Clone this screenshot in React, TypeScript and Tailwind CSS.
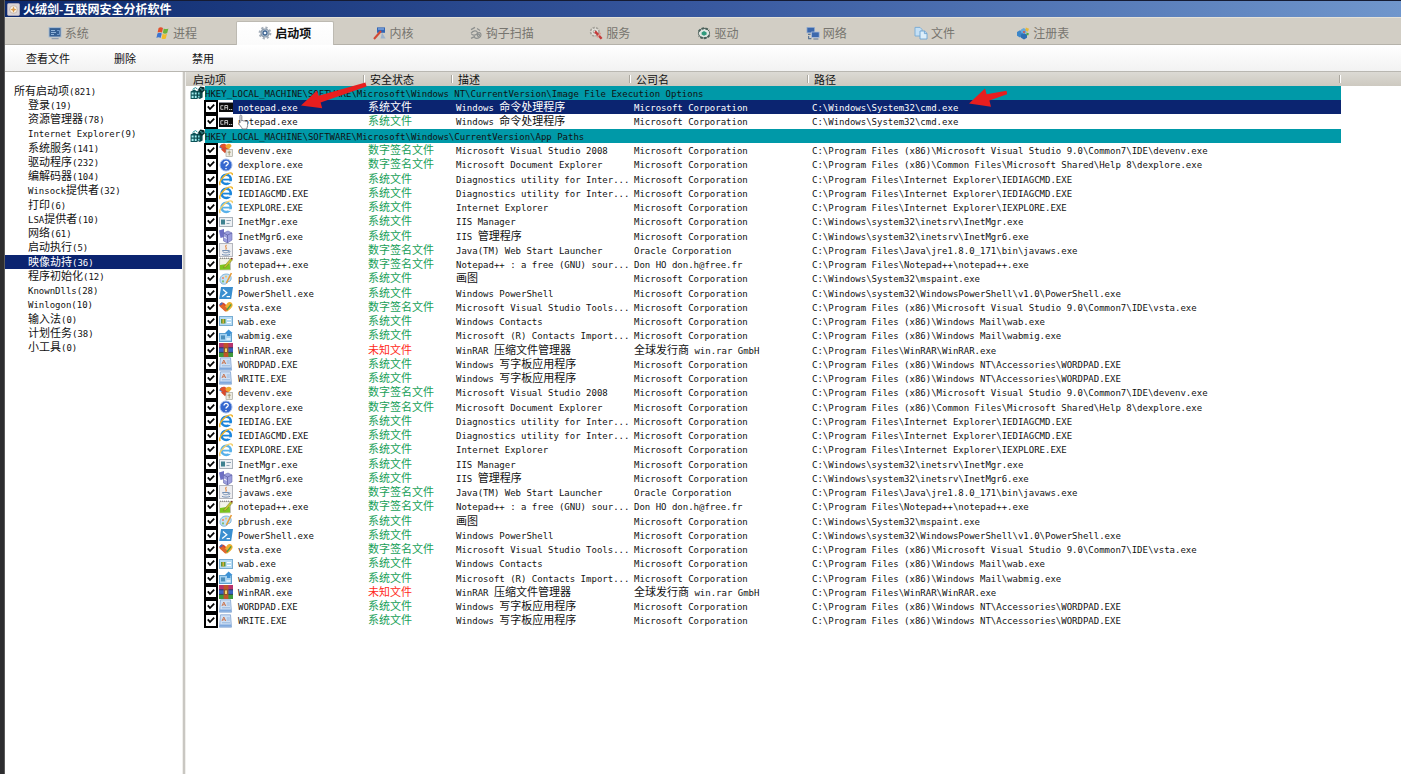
import React from "react";

type IconName =
  | "vs" | "help" | "ie" | "ieLight" | "card" | "server" | "java" | "npp" | "paint"
  | "ps" | "vsta" | "wab" | "wabmig" | "rar" | "doc" | "cmd";

type Entry = {
  icon: IconName;
  name: string;
  status: string;
  description: string;
  company: string;
  path: string;
};

const MS = "Microsoft Corporation";
const SYS = "系统文件";
const SIGNED = "数字签名文件";
const UNKNOWN = "未知文件";

const cmdEntry: Entry = {
  icon: "cmd", name: "notepad.exe", status: SYS, description: "Windows 命令处理程序", company: MS,
  path: "C:\\Windows\\System32\\cmd.exe",
};

const appPaths: Entry[] = [
  { icon: "vs", name: "devenv.exe", status: SIGNED, description: "Microsoft Visual Studio 2008", company: MS, path: "C:\\Program Files (x86)\\Microsoft Visual Studio 9.0\\Common7\\IDE\\devenv.exe" },
  { icon: "help", name: "dexplore.exe", status: SIGNED, description: "Microsoft Document Explorer", company: MS, path: "C:\\Program Files (x86)\\Common Files\\Microsoft Shared\\Help 8\\dexplore.exe" },
  { icon: "ie", name: "IEDIAG.EXE", status: SYS, description: "Diagnostics utility for Inter...", company: MS, path: "C:\\Program Files\\Internet Explorer\\IEDIAGCMD.EXE" },
  { icon: "ie", name: "IEDIAGCMD.EXE", status: SYS, description: "Diagnostics utility for Inter...", company: MS, path: "C:\\Program Files\\Internet Explorer\\IEDIAGCMD.EXE" },
  { icon: "ieLight", name: "IEXPLORE.EXE", status: SYS, description: "Internet Explorer", company: MS, path: "C:\\Program Files\\Internet Explorer\\IEXPLORE.EXE" },
  { icon: "card", name: "InetMgr.exe", status: SYS, description: "IIS Manager", company: MS, path: "C:\\Windows\\system32\\inetsrv\\InetMgr.exe" },
  { icon: "server", name: "InetMgr6.exe", status: SYS, description: "IIS 管理程序", company: MS, path: "C:\\Windows\\system32\\inetsrv\\InetMgr6.exe" },
  { icon: "java", name: "javaws.exe", status: SIGNED, description: "Java(TM) Web Start Launcher", company: "Oracle Corporation", path: "C:\\Program Files\\Java\\jre1.8.0_171\\bin\\javaws.exe" },
  { icon: "npp", name: "notepad++.exe", status: SIGNED, description: "Notepad++ : a free (GNU) sour...", company: "Don HO don.h@free.fr", path: "C:\\Program Files\\Notepad++\\notepad++.exe" },
  { icon: "paint", name: "pbrush.exe", status: SYS, description: "画图", company: MS, path: "C:\\Windows\\System32\\mspaint.exe" },
  { icon: "ps", name: "PowerShell.exe", status: SYS, description: "Windows PowerShell", company: MS, path: "C:\\Windows\\system32\\WindowsPowerShell\\v1.0\\PowerShell.exe" },
  { icon: "vsta", name: "vsta.exe", status: SIGNED, description: "Microsoft Visual Studio Tools...", company: MS, path: "C:\\Program Files (x86)\\Microsoft Visual Studio 9.0\\Common7\\IDE\\vsta.exe" },
  { icon: "wab", name: "wab.exe", status: SYS, description: "Windows Contacts", company: MS, path: "C:\\Program Files (x86)\\Windows Mail\\wab.exe" },
  { icon: "wabmig", name: "wabmig.exe", status: SYS, description: "Microsoft (R) Contacts Import...", company: MS, path: "C:\\Program Files (x86)\\Windows Mail\\wabmig.exe" },
  { icon: "rar", name: "WinRAR.exe", status: UNKNOWN, description: "WinRAR 压缩文件管理器", company: "全球发行商 win.rar GmbH", path: "C:\\Program Files\\WinRAR\\WinRAR.exe" },
  { icon: "doc", name: "WORDPAD.EXE", status: SYS, description: "Windows 写字板应用程序", company: MS, path: "C:\\Program Files (x86)\\Windows NT\\Accessories\\WORDPAD.EXE" },
  { icon: "doc", name: "WRITE.EXE", status: SYS, description: "Windows 写字板应用程序", company: MS, path: "C:\\Program Files (x86)\\Windows NT\\Accessories\\WORDPAD.EXE" },
];

const groups = [
  { key: "HKEY_LOCAL_MACHINE\\SOFTWARE\\Microsoft\\Windows NT\\CurrentVersion\\Image File Execution Options", entries: [cmdEntry, cmdEntry] },
  { key: "HKEY_LOCAL_MACHINE\\SOFTWARE\\Microsoft\\Windows\\CurrentVersion\\App Paths", entries: [...appPaths, ...appPaths] },
];

const categories = [
  "登录(19)", "资源管理器(78)", "Internet Explorer(9)", "系统服务(141)", "驱动程序(232)", "编解码器(104)",
  "Winsock提供者(32)", "打印(6)", "LSA提供者(10)", "网络(61)", "启动执行(5)", "映像劫持(36)", "程序初始化(12)",
  "KnownDlls(28)", "Winlogon(10)", "输入法(0)", "计划任务(38)", "小工具(0)",
];
const SELECTED_CATEGORY = 11;

/* Latin runs stay monospaced; Chinese runs take a larger size. */
function Mixed({ text }: { text: string }) {
  const parts = text.split(/([\u4e00-\u9fff]+)/).filter(Boolean);
  return (
    <>
      {parts.map((p, i) =>
        /[\u4e00-\u9fff]/.test(p) ? (
          <span key={i} className="text-[11px] leading-none">{p}</span>
        ) : (
          <React.Fragment key={i}>{p}</React.Fragment>
        ),
      )}
    </>
  );
}

function EntryIcon({ name }: { name: IconName }) {
  return (
    <svg viewBox="0 0 14 14" className="size-[14px] shrink-0" aria-hidden="true">
      {entryDrawings[name]}
    </svg>
  );
}

const ieShape = (main: string, ring: string) => (
  <>
    <circle cx="7.2" cy="7.4" r="4.6" fill="none" stroke={main} strokeWidth="2.6" />
    <path d="M3.5 7.6h8.4" stroke={main} strokeWidth="1.8" />
    <path d="M9.2 9.3h4v1.6h-4z" fill="#fff" />
    <path d="M1.2 13.2C-.6 10.6 3 5.2 7.4 2.4 10.4.5 13.8.1 13.4 3.2" fill="none" stroke={ring} strokeWidth="1.4" />
  </>
);

const entryDrawings: Record<IconName, React.ReactNode> = {
  cmd: (
    <>
      <rect x="0" y="2" width="14" height="10" fill="#0b0b0b" />
      <path d="M0 2.5h14" stroke="#8b8f99" />
      <path d="M4.4 5.7H1.8v3.6h2.6M5.8 9.8V5.5h2.8v4.3M5.8 7.7h2.8M10 9.5h1M11.6 9.5h1.6" fill="none" stroke="#d0d0d0" strokeWidth=".9" />
    </>
  ),
  vs: (
    <>
      <path d="M.2 4.5C1 1 4 0 6.4 2.2L4 6.5z" fill="#3f76c9" />
      <path d="M.8 3.5C2.5.2 6 0 8 2.5L5.4 7.4z" fill="#e2532c" />
      <path d="M6.4 3C8 0 12 .2 12.6 3L8.4 8z" fill="#f0a92f" />
      <path d="M2 6.4l4 3.8L9.4 6 6 4z" fill="#d94b2d" />
      <rect x="7" y="6.4" width="6.4" height="7.2" fill="#eceae2" stroke="#9a9a90" strokeWidth=".6" />
      <path d="M10.2 7.6v4.8M8.6 9.2h3.2" stroke="#a29467" strokeWidth=".9" />
    </>
  ),
  help: (
    <>
      <circle cx="7" cy="7" r="6" fill="#3467cf" stroke="#9db7e8" />
      <path d="M5 5.6c0-3 4.4-2.6 4.2-.2C9 7 7 6.8 7 8.6M7 10v1.3" fill="none" stroke="#fff" strokeWidth="1.3" />
    </>
  ),
  ie: ieShape("#1c86dc", "#f0b429"),
  ieLight: ieShape("#58b1ea", "#f3cf6b"),
  card: (
    <>
      <rect x=".5" y="2.5" width="13" height="9" fill="#eef1f4" stroke="#a9b2ba" />
      <rect x="2" y="4.5" width="4" height="5" fill="#3f8290" />
      <path d="M7.5 5.5h4.5M7.5 8.5h3" stroke="#8ea4b4" />
    </>
  ),
  server: (
    <>
      <path d="M0 1.5L5 0v8L1.5 9z" fill="#6d6fc4" />
      <path d="M4.5 4L9 2l4 2v7l-4.5 3-4-2z" fill="#9c9fdd" stroke="#6a6bb0" strokeWidth=".6" />
      <path d="M4.5 4l4 2V14M8.5 6L13 4" fill="none" stroke="#5a5ba2" strokeWidth=".7" />
      <path d="M5 8l2.6 1.4" stroke="#fff" />
    </>
  ),
  java: (
    <>
      <rect x=".5" y=".5" width="13" height="13" fill="#ededf0" stroke="#b4b6bd" />
      <path d="M7.5 2c-2.8 2 1.4 2.4-.8 4.6" fill="none" stroke="#e3883d" strokeWidth="1.1" />
      <path d="M3.5 7.5h6.2c0 3-6 3-6.2 0zM9.6 8c2-.6 1.8 1.8-.3 1.8M3 11.4c2 1 6 1 8 0" fill="none" stroke="#7590b4" strokeWidth="1" />
    </>
  ),
  npp: (
    <>
      <path d="M.6 1.6h10.8v11.2H.6z" fill="#f4f4ea" stroke="#a3a399" strokeWidth=".7" />
      <path d="M1 8l9.8-1.4.4 6-10.2.2z" fill="#7cc51d" />
      <path d="M5 9.5L11.8 1.4l1.8 1.4-6.8 7.4-2.2.8z" fill="#c9c52f" stroke="#6c7a2c" strokeWidth=".5" />
      <path d="M1 1.2h10" stroke="#777" strokeDasharray="1 1" />
      <circle cx="12.8" cy="1.6" r=".9" fill="#7a2c22" />
    </>
  ),
  paint: (
    <>
      <path d="M1 8c0-4 3-6 6.4-6 4 0 5.6 3 4.4 6-.8 2-2.8.9-3.4 2.4C7.6 13 1 13.4 1 8z" fill="#c3e1f4" stroke="#6ba6d2" strokeWidth=".8" />
      <circle cx="4" cy="6" r="1.1" fill="#e98a6b" />
      <circle cx="7" cy="4.6" r="1.1" fill="#f1c46c" />
      <circle cx="4" cy="9.4" r="1.1" fill="#7dbd72" />
      <path d="M7.4 11L12.4 1" stroke="#e79b3a" strokeWidth="1.6" />
    </>
  ),
  ps: (
    <>
      <path d="M2 1h12l-1.8 12H.2z" fill="#3a8fd0" />
      <path d="M4 3.5l3.8 3.3L3.2 10.6M7.6 10.6h3.4" fill="none" stroke="#fff" strokeWidth="1.3" />
    </>
  ),
  vsta: (
    <>
      <path d="M.2 6C.4 2.6 3.4 1.4 5.6 3.4l3 3.2-2.8 4z" fill="#d8482d" />
      <path d="M4.4 8.6L8.4 3C10.6 1 13.9 2.6 13.6 5.6c-.3 2-3.6 5.2-6 6.2z" fill="#efb02f" />
      <path d="M.8 6.4l5.6 5.4 2.4-2.6L4 4.2z" fill="#e0662d" />
      <path d="M7.8 10l4.4-5.6" stroke="#4f9c43" strokeWidth="1.4" />
      <path d="M.8 4.8L3.4 3" stroke="#3f6fc4" strokeWidth="1.6" />
    </>
  ),
  wab: (
    <>
      <rect x=".5" y="2.5" width="13" height="9" fill="#b7dcf4" stroke="#77acd2" />
      <rect x="2" y="5" width="4.5" height="4.5" fill="#5f9638" />
      <path d="M4.2 5v4.5" stroke="#e4b23c" strokeWidth="1.4" />
      <path d="M8 5.5h4M8 8.5h4" stroke="#fff" strokeWidth="1.2" />
    </>
  ),
  wabmig: (
    <>
      <rect x=".5" y="4.5" width="12" height="8" fill="#a4d2f1" stroke="#5d9fcd" />
      <path d="M5.5 4.6L9.6.4l4 3.6h-2.2v3H8V4.6z" fill="#3c92d6" />
      <rect x="2" y="6.4" width="4" height="4" fill="#4d8fbb" />
      <path d="M7.4 10h4" stroke="#fff" strokeWidth="1.2" />
    </>
  ),
  rar: (
    <>
      <rect x="0" y="0" width="14" height="5" fill="#b8336c" />
      <rect x="0" y="4.6" width="14" height="5" fill="#3b64c0" />
      <rect x="0" y="9.2" width="14" height="4.8" fill="#3e9a3c" />
      <rect x="4.6" y="0" width="4.8" height="14" fill="#c0552a" />
      <rect x="5.4" y="5" width="3.2" height="4.4" fill="#f3d66a" stroke="#75401d" strokeWidth=".7" />
      <path d="M0 4.8h4.6M9.4 4.8H14M0 9.4h4.6M9.4 9.4H14" stroke="#21264a" strokeWidth=".7" />
    </>
  ),
  doc: (
    <>
      <path d="M1.5.8h10l1 12.4h-12z" fill="#cfe0f5" stroke="#7fa2d0" strokeWidth=".8" />
      <path d="M3 7l1.8-4L6.8 7M3.6 5.8H6" fill="none" stroke="#c9704a" strokeWidth=".9" />
      <path d="M7.8 4h3M7.8 6h3M3 8.8h8" stroke="#8fb0da" strokeWidth=".9" />
      <path d="M1 10.4h11v2.4H.8z" fill="#7fa8dd" />
    </>
  ),
};

function RegistryIcon() {
  return (
    <svg viewBox="0 0 15 14" className="h-[14px] w-[15px] shrink-0" aria-hidden="true">
      <path d="M.6 5.4l3.6-2 3.4 2V13H.6z" fill="#0c5358" />
      <path d="M1.6 6.4h2v2.2h-2zM4.8 6.4h1.8v2.2H4.8zM1.6 9.8h2V12h-2zM4.800 9.8h1.8V12H4.8z" fill="#a8eef0" />
      <path d="M7 5l2.8-1.6L12.6 5v6.4L9.8 13 7 11.600z" fill="#0b464a" />
      <path d="M8 6.600h1.600v2H8zM8 9.8h1.600v1.8H8z" fill="#74d3d8" />
      <path d="M8 3.400L10.400.6l4 .6.4 3.200-3 2.600z" fill="#062b2d" />
      <path d="M10 2.600l2 .6M11.600 4.400l1.800-.8" stroke="#5fc5ca" strokeWidth=".8" />
      <path d="M2.600 3.400L5.400 1.600l2 1.400" fill="none" stroke="#2b979c" strokeWidth="1" />
    </svg>
  );
}

const tabDrawings: Record<string, React.ReactNode> = {
  系统: (
    <>
      <rect x="1" y="1.6" width="12" height="9.400" fill="#345f93" stroke="#a9bdd2" />
      <path d="M3 4.500h4M3 6.500h5M3 8.500h3" stroke="#8fb2d8" />
      <path d="M9 4.500h2.500v4H9" fill="none" stroke="#6f98c8" />
      <path d="M3.600 12.600h7" stroke="#8e9cac" strokeWidth="1.2" />
    </>
  ),
  进程: (
    <>
      <path d="M2.600 2c1.400-1 3-.9 4.400 0L6 6.600c-1.400-.9-3-.9-4.400 0z" fill="#e2502c" />
      <path d="M7.800 2.400c1.400.9 3 .9 4.600 0l-1.200 4.600c-1.400.9-3 .8-4.400 0z" fill="#6cb33c" />
      <path d="M1.400 7.400c1.400-.9 3-.9 4.400 0l-1.200 4.600c-1.400-.9-2.800-.9-4.200 0z" fill="#3c74cf" />
      <path d="M6.600 7.800c1.400.9 3 .9 4.400 0l-1.200 4.600c-1.400.9-2.800.8-4.200 0z" fill="#f1bc2c" />
    </>
  ),
  启动项: (
    <>
      <circle cx="7" cy="7" r="5.400" fill="none" stroke="#a4aeb9" strokeWidth="2" strokeDasharray="2.200 2" />
      <circle cx="7" cy="7" r="4" fill="#c3ced9" stroke="#8494a6" strokeWidth="1.200" />
      <circle cx="7" cy="7" r="2" fill="#eef4fa" stroke="#3d6391" strokeWidth="1.300" />
    </>
  ),
  内核: (
    <>
      <path d="M4 1.400h8v5.400H4z" fill="#3165b5" />
      <path d="M9 6.600l3.600 5.800H7.600z" fill="#9db3cc" />
      <path d="M1 13L8 5" stroke="#d24a35" strokeWidth="2" />
      <path d="M5 3h6" stroke="#a3c3ef" />
    </>
  ),
  钩子扫描: (
    <g fill="none" stroke="#8c8f8e" strokeWidth="1.200">
      <path d="M2 3.600l4-2.200M2 7.400c2-3 5.600-3.400 6.400-1S4 10 2.400 8" />
      <path d="M5.400 11.400c2.600 2 6.600.2 6.600-2.400S9.400 5.600 8 8M2 12.400l4-2M8 2.400l3 2" />
      <circle cx="9.400" cy="9.200" r="1.100" />
    </g>
  ),
  服务: (
    <>
      <circle cx="5.800" cy="5.800" r="4.200" fill="#e4e2dc" stroke="#a5a29a" strokeWidth="1.600" strokeDasharray="2.400 1" />
      <circle cx="5.800" cy="5.800" r="1.600" fill="#f6f5f2" stroke="#a5a29a" />
      <path d="M6 5.400l6.600 7.400" stroke="#c43a3a" strokeWidth="2.400" />
      <path d="M8 11.400l3.600-4.400" stroke="#e09a8f" strokeWidth="1.400" />
    </>
  ),
  驱动: (
    <>
      <ellipse cx="7" cy="7.200" rx="5.600" ry="4.800" fill="#dfe7e2" stroke="#5c6c66" strokeWidth="1" />
      <path d="M1.800 5.400C4 1.600 9.400 1.400 12 4.400M12.400 9.200C10 13 5 13 2 10" fill="none" stroke="#4b615b" strokeWidth="2" strokeDasharray="2.600 1.200" />
      <path d="M4.600 6.400l2.400-1.400 2.600 1.400v2L7 9.800 4.600 8.400z" fill="#2f9a7c" />
    </>
  ),
  网络: (
    <>
      <rect x="1" y="1.600" width="7.400" height="5.200" fill="#3b68ad" stroke="#8aa6cd" strokeWidth=".8" />
      <rect x="5.600" y="6" width="7.600" height="5.400" fill="#3b68ad" stroke="#a5badb" strokeWidth=".8" />
      <path d="M2 8.400h2.600M2.600 10v2.600h2.800M7.400 13h5" fill="none" stroke="#5d7796" strokeWidth="1.200" />
    </>
  ),
  文件: (
    <>
      <path d="M1 1.400h5l2 2V10H1z" fill="#c5e0f5" stroke="#76aad6" strokeWidth=".9" />
      <path d="M6 5h4.600L13 7.400V13H6z" fill="#dceefa" stroke="#6ba3d3" strokeWidth=".9" />
      <path d="M10.400 5v2.600H13" fill="none" stroke="#6ba3d3" strokeWidth=".9" />
    </>
  ),
  注册表: (
    <>
      <path d="M1 6l3-1.800L7 6v3.800L4 11.600 1 9.800z" fill="#3c86c9" />
      <path d="M5 8.600L8 7l3 1.600v3.200L8 13.400l-3-1.600z" fill="#2c6fb4" />
      <path d="M5 3.400L7.800 2l2.600 1.400v3L7.800 7.800 5 6.400z" fill="#67a9dc" />
      <path d="M9.800 1.400l3.200 1.400-1 3-2.600-1z" fill="#e8b93a" />
      <path d="M10.600 6.400l2.400 1-.8 2.200-2-.8z" fill="#4faa4b" />
      <circle cx="8" cy="6" r="1" fill="#d9503f" />
    </>
  ),
};

const tabs = Object.keys(tabDrawings);
const ACTIVE_TAB = "启动项";

function statusColor(status: string, selected: boolean) {
  if (selected) return "text-white";
  return status === UNKNOWN ? "text-[#ff2a22]" : "text-[#18a058]";
}

function EntryRow({ entry, selected }: { entry: Entry; selected: boolean }) {
  const cell = selected
    ? "bg-[#0b2470] p-0 pt-[2px] pl-[3px] align-top leading-[12px] text-white"
    : "p-0 pt-[2px] pl-[3px] align-top leading-[12px]";
  return (
    <tr className="h-[14px] nth-[4n+3]:h-[15px]">
      <td className="h-px p-0">
        <label className="flex h-full items-stretch pl-[18px] leading-[12px]">
          <span className="grid w-[14px] shrink-0">
            <input
              type="checkbox"
              defaultChecked
              className="peer m-0 appearance-none border-2 border-black bg-white [grid-area:1/1]"
            />
            <svg
              viewBox="0 0 14 14"
              className="pointer-events-none invisible size-[14px] [grid-area:1/1] peer-checked:visible"
              aria-hidden="true"
            >
              <path d="M3.800 6.400l2.200 2.600 4.200-4.400" fill="none" stroke="#000" strokeWidth="1.800" />
            </svg>
          </span>
          <span className="flex w-[15px] shrink-0 items-center justify-end">
            <EntryIcon name={entry.icon} />
          </span>
          <span className={selected ? "flex-1 bg-[#0b2470] pt-[2px] pl-[5px] text-white" : "flex-1 pt-[2px] pl-[5px]"}>
            <Mixed text={entry.name} />
          </span>
        </label>
      </td>
      <td className={cell}>
        <span className={statusColor(entry.status, selected)}>
          <Mixed text={entry.status} />
        </span>
      </td>
      <td className={cell}><Mixed text={entry.description} /></td>
      <td className={cell}><Mixed text={entry.company} /></td>
      <td className={cell}><Mixed text={entry.path} /></td>
      <td className="p-0" />
    </tr>
  );
}

export default function App() {
  return (
    <div className="flex min-h-screen w-full overflow-hidden bg-white font-['DejaVu_Sans_Mono','Noto_Sans_CJK_SC',monospace] text-[9px] leading-[14px] text-[#111]">
      <div className="w-[5px] shrink-0 border-r border-[#5a5a5a] bg-[#2d2d2f]" />
      <div className="relative flex min-w-0 flex-1 flex-col">
        <header className="flex h-[17px] items-center gap-[3px] border-t border-[#151b33] bg-linear-to-r from-[#0d2a6e] via-[#38589f] to-[#7096cc] pl-[2px] text-white">
          <svg viewBox="0 0 14 14" className="size-[13px]" aria-hidden="true">
            <rect x=".5" y=".5" width="13" height="13" rx="1.500" fill="#d9d4d6" stroke="#a9a3b4" />
            <circle cx="7" cy="7" r="4.200" fill="#f4ecdf" stroke="#b9a9a6" strokeWidth=".8" />
            <path d="M7 3.600l1 2.600 2.400.8L8 8 7 10.600 6 8l-2.400-.9L6 6.200z" fill="#d89a4c" />
          </svg>
          <h1 className="font-['Noto_Sans_CJK_SC',sans-serif] text-[12px] leading-[14px] font-bold whitespace-nowrap">
            火绒剑-互联网安全分析软件
          </h1>
        </header>

        <nav className="flex h-[28px] items-end border-t border-b border-t-[#e4e1d8] border-b-[#b5b2aa] bg-[#d2cec5] pl-[9px]">
          <div role="tablist" className="-mb-px grid w-[1083px] grid-cols-10 justify-items-center">
            {tabs.map((tab) => {
              const active = tab === ACTIVE_TAB;
              return (
                <button
                  key={tab}
                  type="button"
                  role="tab"
                  aria-selected={active}
                  className={
                    active
                      ? "flex h-[24px] w-[98px] items-center justify-center gap-[3px] rounded-t-[2px] border border-b-0 border-[#bdbab2] bg-linear-to-b from-white to-[#fbfbfb] pb-px font-['Noto_Sans_CJK_SC',sans-serif] text-[12px] leading-[14px] font-bold text-[#111]"
                      : "flex h-[24px] w-[98px] items-center justify-center gap-[3px] pb-px font-['Noto_Sans_CJK_SC',sans-serif] text-[12px] leading-[14px] text-[#77756f]"
                  }
                >
                  <svg viewBox="0 0 14 14" className="size-[14px] shrink-0" aria-hidden="true">
                    {tabDrawings[tab]}
                  </svg>
                  {tab}
                </button>
              );
            })}
          </div>
        </nav>

        <div className="flex h-[27px] items-center border-b border-[#b9b7b1] bg-linear-to-b from-white to-[#f2f2f2] pt-[3px] pl-[21px] text-[11px]">
          <button type="button" className="w-[88px] text-left">查看文件</button>
          <button type="button" className="w-[78px] text-left">删除</button>
          <button type="button" className="text-left">禁用</button>
        </div>

        <div className="flex flex-1">
          <aside className="w-[177px] shrink-0 pt-3 leading-[12px]">
            <button type="button" className="block h-[14px] w-full pt-[2px] pl-[9px] text-left whitespace-nowrap">
              <Mixed text="所有启动项(821)" />
            </button>
            <ul>
              {categories.map((label, i) => (
                <li
                  key={label}
                  className={
                    i === SELECTED_CATEGORY
                      ? "h-[14px] bg-[#0b2470] text-white nth-[4n+3]:h-[15px]"
                      : "h-[14px] nth-[4n+3]:h-[15px]"
                  }
                >
                  <button type="button" className="block h-[14px] w-full pt-[2px] pl-[23px] text-left whitespace-nowrap">
                    <Mixed text={label} />
                  </button>
                </li>
              ))}
            </ul>
          </aside>
          <div className="w-[4px] shrink-0 border-x border-[#f0efec] bg-[#c9c7c2]" />

          <main className="min-w-0 flex-1 overflow-hidden">
            <table className="w-full table-fixed border-collapse whitespace-nowrap">
              <colgroup>
                <col className="w-[179px]" />
                <col className="w-[88px]" />
                <col className="w-[178px]" />
                <col className="w-[178px]" />
                <col className="w-[532px]" />
                <col />
              </colgroup>
              <thead>
                <tr className="h-[14px] bg-linear-to-b from-[#dcdad4] to-[#cdc9c0] text-left text-[11px]">
                  {["启动项", "安全状态", "描述", "公司名", "路径"].map((h) => (
                    <th key={h} scope="col" className="p-0 pl-[5px] font-normal first:pl-[7px]">
                      <span className="flex h-[14px] items-center justify-between overflow-hidden">
                        <span className="pt-[3px]">{h}</span>
                        <span className="h-2 w-[2px] border-l border-[#aaa79f] bg-white" />
                      </span>
                    </th>
                  ))}
                  <td className="p-0" />
                </tr>
              </thead>
              {groups.map((group, g) => (
                <tbody key={group.key}>
                  <tr className="h-[14px]">
                    <th scope="rowgroup" colSpan={5} className="p-0 text-left font-normal">
                      <span className="flex h-[14px] pl-1 leading-[12px]">
                        <RegistryIcon />
                        <span className="flex-1 bg-[#0099a8] pt-[2px]">{group.key}</span>
                      </span>
                    </th>
                    <td className="p-0" />
                  </tr>
                  {group.entries.map((entry, i) => (
                    <EntryRow key={i} entry={entry} selected={g === 0 && i === 0} />
                  ))}
                </tbody>
              ))}
            </table>
          </main>
        </div>

        <svg viewBox="0 0 66 28" className="pointer-events-none absolute top-[82px] left-[296px] h-[28px] w-[66px]" aria-hidden="true">
          <path d="M0 23.400L16 8.600l1.600 5.200L64.400.4l1.200 4.200L19.600 20.600l1.600 5.600z" fill="#e81e1e" />
        </svg>
        <svg viewBox="0 0 38 19" className="pointer-events-none absolute top-[88px] left-[964px] h-[19px] w-[38px]" aria-hidden="true">
          <path d="M0 15.400L16 .6l1.600 5.600L37.400 2.800l1 3.400-18 6.400 1.600 6.200z" fill="#e81e1e" />
        </svg>
        <svg viewBox="0 0 12 16" className="pointer-events-none absolute top-[114px] left-[233px] h-[16px] w-[12px]" aria-hidden="true">
          <path d="M2 1.400c1-.8 1.800 0 1.800.8V7c.6-.8 1.800-.6 2 .2.6-.6 1.800-.4 2 .4.8-.4 1.800 0 1.800 1v3c0 1.400-.8 2-1 3.400H4.400C3.800 13 1 11 .8 9.400.8 8.600 1.600 8.600 2 9z" fill="#fff" stroke="#707480" strokeWidth=".9" />
        </svg>
      </div>
    </div>
  );
}
